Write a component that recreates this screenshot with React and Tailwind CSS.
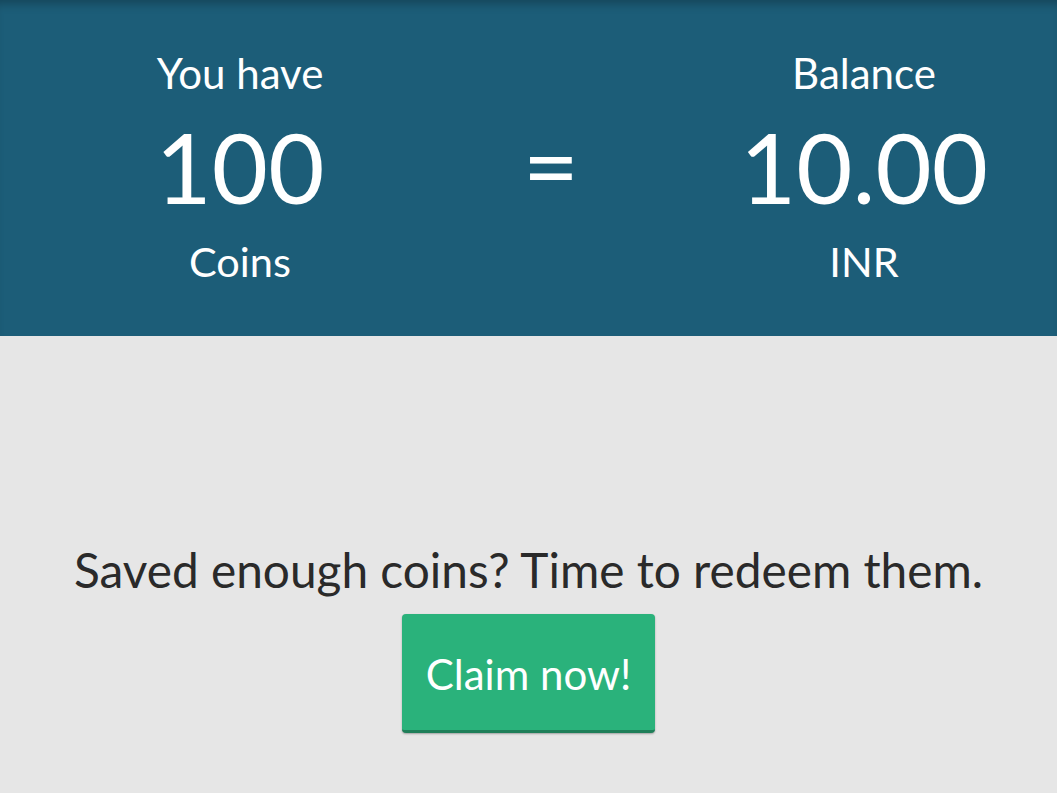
export default function App() {
  return (
    <div className="w-[1057px] h-[793px] bg-[#e6e6e6] flex flex-col" style={{ fontFamily: "Lato, 'Open Sans', sans-serif" }}>
      <div className="h-[336px] bg-[#1c5d78] shadow-[inset_0_10px_10px_-6px_rgba(0,0,0,0.25)] flex text-white pt-[46px]">
        <div className="w-[480px] flex flex-col items-center">
          <div className="text-[42px] leading-[54px]">You have</div>
          <div className="text-[97px] leading-[118px] mt-[8px]">100</div>
          <div className="text-[41.5px] leading-[54px] mt-[8px]">Coins</div>
        </div>
        <div className="w-[142px] flex flex-col items-center pt-[59px]">
          <div className="text-[97px] leading-[118px]">=</div>
        </div>
        <div className="w-[49px]" />
        <div className="w-[386px] flex flex-col items-center">
          <div className="text-[42px] leading-[54px]">Balance</div>
          <div className="text-[97px] leading-[118px] mt-[8px]">10.00</div>
          <div className="text-[41.5px] leading-[54px] mt-[8px]">INR</div>
        </div>
      </div>
      <div className="flex flex-col items-center pt-[202px]">
        <div className="text-[47.8px] leading-[64px] text-[#2a2a2a]">Saved enough coins? Time to redeem them.</div>
        <button className="mt-[12px] h-[119px] px-[24px] pt-[5px] bg-[#2ab27b] text-white text-[42px] rounded-[4px] border-b-[3px] border-[#1f7f59] shadow-[0_1px_2px_rgba(0,0,0,0.3)]">Claim now!</button>
      </div>
    </div>
  );
}
